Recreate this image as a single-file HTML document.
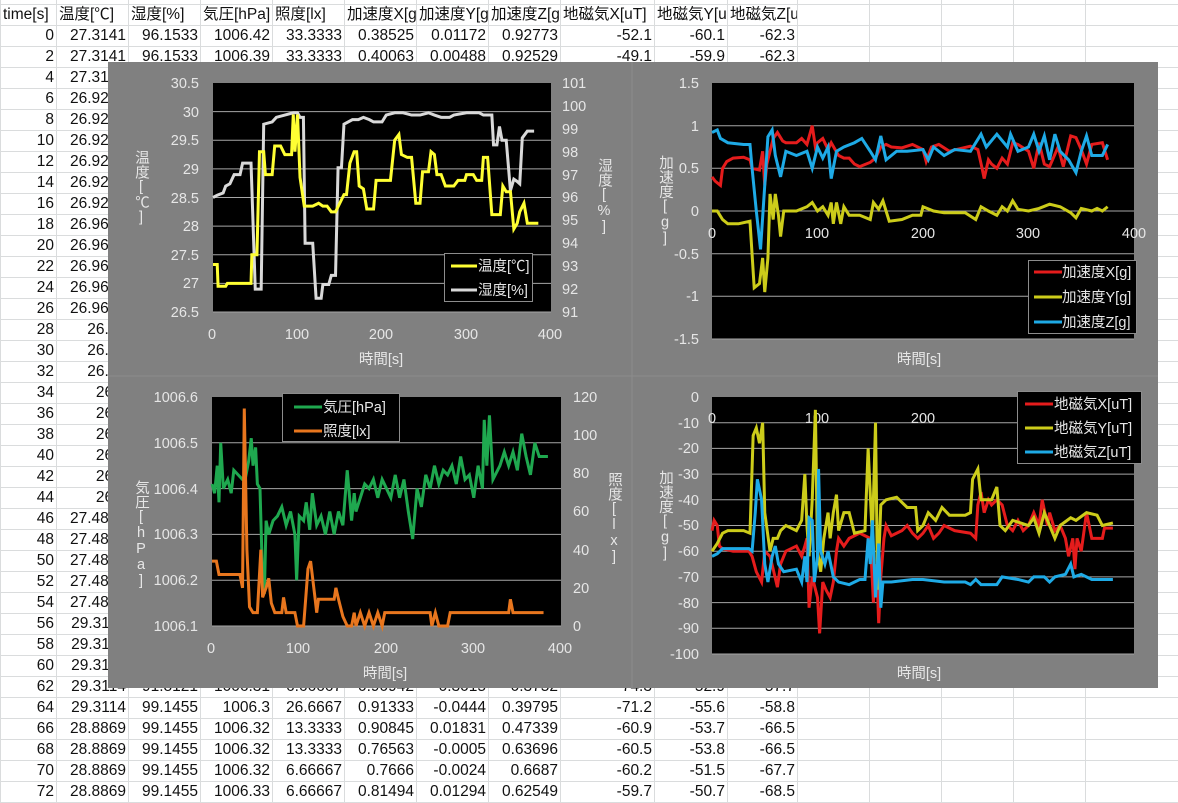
<!DOCTYPE html>
<html><head><meta charset="utf-8"><style>
body{margin:0;width:1178px;height:794px;overflow:hidden;background:#fff;position:relative;font-family:"Liberation Sans","Noto Sans CJK JP",sans-serif}
table{position:absolute;left:0;top:-17px;width:1180px;border-collapse:collapse;table-layout:fixed;font-size:15.5px;color:#111}
td{border:1px solid #dadcdd;height:20px;padding:0 2px;white-space:nowrap;overflow:hidden;text-align:right;line-height:20px}
tr.h td{text-align:left;padding-left:2px;text-overflow:clip}
svg{position:absolute;left:0;top:0}
svg text{font-family:"Liberation Sans","Noto Sans CJK JP",sans-serif;fill:#e6e6e6;font-size:14.5px}
.vt{position:absolute;writing-mode:vertical-rl;text-orientation:upright;color:#e6e6e6;font-size:14.5px;line-height:16px;letter-spacing:0px;font-family:"Liberation Sans","Noto Sans CJK JP",sans-serif}
</style></head><body>
<table>
<colgroup><col style="width:56px"><col style="width:72px"><col style="width:72px"><col style="width:72px"><col style="width:72px"><col style="width:72px"><col style="width:72px"><col style="width:72px"><col style="width:94px"><col style="width:73px"><col style="width:70px"><col style="width:72px"><col style="width:72px"><col style="width:72px"><col style="width:72px"><col style="width:95px"></colgroup>
<tr><td></td><td></td><td></td><td></td><td></td><td></td><td></td><td></td><td></td><td></td><td></td><td></td><td></td><td></td><td></td><td></td></tr>
<tr class="h"><td>time[s]</td><td>温度[℃]</td><td>湿度[%]</td><td>気圧[hPa]</td><td>照度[lx]</td><td>加速度X[g]</td><td>加速度Y[g]</td><td>加速度Z[g]</td><td>地磁気X[uT]</td><td>地磁気Y[uT]</td><td>地磁気Z[uT]</td><td></td><td></td><td></td><td></td><td></td></tr>
<tr><td>0</td><td>27.3141</td><td>96.1533</td><td>1006.42</td><td>33.3333</td><td>0.38525</td><td>0.01172</td><td>0.92773</td><td>-52.1</td><td>-60.1</td><td>-62.3</td><td></td><td></td><td></td><td></td><td></td></tr>
<tr><td>2</td><td>27.3141</td><td>96.1533</td><td>1006.39</td><td>33.3333</td><td>0.40063</td><td>0.00488</td><td>0.92529</td><td>-49.1</td><td>-59.9</td><td>-62.3</td><td></td><td></td><td></td><td></td><td></td></tr>
<tr><td>4</td><td>27.3141</td><td></td><td></td><td></td><td></td><td></td><td></td><td></td><td></td><td></td><td></td><td></td><td></td><td></td><td></td></tr>
<tr><td>6</td><td>26.9258</td><td></td><td></td><td></td><td></td><td></td><td></td><td></td><td></td><td></td><td></td><td></td><td></td><td></td><td></td></tr>
<tr><td>8</td><td>26.9258</td><td></td><td></td><td></td><td></td><td></td><td></td><td></td><td></td><td></td><td></td><td></td><td></td><td></td><td></td></tr>
<tr><td>10</td><td>26.9258</td><td></td><td></td><td></td><td></td><td></td><td></td><td></td><td></td><td></td><td></td><td></td><td></td><td></td><td></td></tr>
<tr><td>12</td><td>26.9258</td><td></td><td></td><td></td><td></td><td></td><td></td><td></td><td></td><td></td><td></td><td></td><td></td><td></td><td></td></tr>
<tr><td>14</td><td>26.9258</td><td></td><td></td><td></td><td></td><td></td><td></td><td></td><td></td><td></td><td></td><td></td><td></td><td></td><td></td></tr>
<tr><td>16</td><td>26.9258</td><td></td><td></td><td></td><td></td><td></td><td></td><td></td><td></td><td></td><td></td><td></td><td></td><td></td><td></td></tr>
<tr><td>18</td><td>26.9644</td><td></td><td></td><td></td><td></td><td></td><td></td><td></td><td></td><td></td><td></td><td></td><td></td><td></td><td></td></tr>
<tr><td>20</td><td>26.9644</td><td></td><td></td><td></td><td></td><td></td><td></td><td></td><td></td><td></td><td></td><td></td><td></td><td></td><td></td></tr>
<tr><td>22</td><td>26.9644</td><td></td><td></td><td></td><td></td><td></td><td></td><td></td><td></td><td></td><td></td><td></td><td></td><td></td><td></td></tr>
<tr><td>24</td><td>26.9644</td><td></td><td></td><td></td><td></td><td></td><td></td><td></td><td></td><td></td><td></td><td></td><td></td><td></td><td></td></tr>
<tr><td>26</td><td>26.9644</td><td></td><td></td><td></td><td></td><td></td><td></td><td></td><td></td><td></td><td></td><td></td><td></td><td></td><td></td></tr>
<tr><td>28</td><td>26.99</td><td></td><td></td><td></td><td></td><td></td><td></td><td></td><td></td><td></td><td></td><td></td><td></td><td></td><td></td></tr>
<tr><td>30</td><td>26.99</td><td></td><td></td><td></td><td></td><td></td><td></td><td></td><td></td><td></td><td></td><td></td><td></td><td></td><td></td></tr>
<tr><td>32</td><td>26.99</td><td></td><td></td><td></td><td></td><td></td><td></td><td></td><td></td><td></td><td></td><td></td><td></td><td></td><td></td></tr>
<tr><td>34</td><td>26.9</td><td></td><td></td><td></td><td></td><td></td><td></td><td></td><td></td><td></td><td></td><td></td><td></td><td></td><td></td></tr>
<tr><td>36</td><td>26.9</td><td></td><td></td><td></td><td></td><td></td><td></td><td></td><td></td><td></td><td></td><td></td><td></td><td></td><td></td></tr>
<tr><td>38</td><td>26.9</td><td></td><td></td><td></td><td></td><td></td><td></td><td></td><td></td><td></td><td></td><td></td><td></td><td></td><td></td></tr>
<tr><td>40</td><td>26.9</td><td></td><td></td><td></td><td></td><td></td><td></td><td></td><td></td><td></td><td></td><td></td><td></td><td></td><td></td></tr>
<tr><td>42</td><td>26.9</td><td></td><td></td><td></td><td></td><td></td><td></td><td></td><td></td><td></td><td></td><td></td><td></td><td></td><td></td></tr>
<tr><td>44</td><td>26.9</td><td></td><td></td><td></td><td></td><td></td><td></td><td></td><td></td><td></td><td></td><td></td><td></td><td></td><td></td></tr>
<tr><td>46</td><td>27.4855</td><td></td><td></td><td></td><td></td><td></td><td></td><td></td><td></td><td></td><td></td><td></td><td></td><td></td><td></td></tr>
<tr><td>48</td><td>27.4855</td><td></td><td></td><td></td><td></td><td></td><td></td><td></td><td></td><td></td><td></td><td></td><td></td><td></td><td></td></tr>
<tr><td>50</td><td>27.4855</td><td></td><td></td><td></td><td></td><td></td><td></td><td></td><td></td><td></td><td></td><td></td><td></td><td></td><td></td></tr>
<tr><td>52</td><td>27.4855</td><td></td><td></td><td></td><td></td><td></td><td></td><td></td><td></td><td></td><td></td><td></td><td></td><td></td><td></td></tr>
<tr><td>54</td><td>27.4855</td><td></td><td></td><td></td><td></td><td></td><td></td><td></td><td></td><td></td><td></td><td></td><td></td><td></td><td></td></tr>
<tr><td>56</td><td>29.3114</td><td></td><td></td><td></td><td></td><td></td><td></td><td></td><td></td><td></td><td></td><td></td><td></td><td></td><td></td></tr>
<tr><td>58</td><td>29.3114</td><td></td><td></td><td></td><td></td><td></td><td></td><td></td><td></td><td></td><td></td><td></td><td></td><td></td><td></td></tr>
<tr><td>60</td><td>29.3114</td><td></td><td></td><td></td><td></td><td></td><td></td><td></td><td></td><td></td><td></td><td></td><td></td><td></td><td></td></tr>
<tr><td>62</td><td>29.3114</td><td>91.8121</td><td>1006.31</td><td>6.66667</td><td>0.90942</td><td>0.3015</td><td>0.3752</td><td>-74.3</td><td>-52.9</td><td>-57.7</td><td></td><td></td><td></td><td></td><td></td></tr>
<tr><td>64</td><td>29.3114</td><td>99.1455</td><td>1006.3</td><td>26.6667</td><td>0.91333</td><td>-0.0444</td><td>0.39795</td><td>-71.2</td><td>-55.6</td><td>-58.8</td><td></td><td></td><td></td><td></td><td></td></tr>
<tr><td>66</td><td>28.8869</td><td>99.1455</td><td>1006.32</td><td>13.3333</td><td>0.90845</td><td>0.01831</td><td>0.47339</td><td>-60.9</td><td>-53.7</td><td>-66.5</td><td></td><td></td><td></td><td></td><td></td></tr>
<tr><td>68</td><td>28.8869</td><td>99.1455</td><td>1006.32</td><td>13.3333</td><td>0.76563</td><td>-0.0005</td><td>0.63696</td><td>-60.5</td><td>-53.8</td><td>-66.5</td><td></td><td></td><td></td><td></td><td></td></tr>
<tr><td>70</td><td>28.8869</td><td>99.1455</td><td>1006.32</td><td>6.66667</td><td>0.7666</td><td>-0.0024</td><td>0.6687</td><td>-60.2</td><td>-51.5</td><td>-67.7</td><td></td><td></td><td></td><td></td><td></td></tr>
<tr><td>72</td><td>28.8869</td><td>99.1455</td><td>1006.33</td><td>6.66667</td><td>0.81494</td><td>0.01294</td><td>0.62549</td><td>-59.7</td><td>-50.7</td><td>-68.5</td><td></td><td></td><td></td><td></td><td></td></tr>
</table>

<svg width="1178" height="794" viewBox="0 0 1178 794">
<rect x="108" y="62" width="1050" height="626" fill="#808080"/>
<line x1="632" y1="62" x2="632" y2="688" stroke="#8c8c8c"/>
<line x1="108" y1="376" x2="1158" y2="376" stroke="#8c8c8c"/>

<rect x="213" y="83" width="338" height="229" fill="#000"/>
<g stroke="#a6a6a6" stroke-width="1">
<line x1="213" x2="551" y1="111.6" y2="111.6"/><line x1="213" x2="551" y1="140.3" y2="140.3"/><line x1="213" x2="551" y1="168.9" y2="168.9"/><line x1="213" x2="551" y1="197.5" y2="197.5"/><line x1="213" x2="551" y1="226.1" y2="226.1"/><line x1="213" x2="551" y1="254.8" y2="254.8"/><line x1="213" x2="551" y1="283.4" y2="283.4"/><line x1="213" x2="551" y1="312" y2="312"/>
</g>
<g transform="translate(213,312) scale(0.845,-22.9) translate(0,-91)">
<polyline fill="none" stroke="#d9d9d9" stroke-width="3" vector-effect="non-scaling-stroke" points="0,96 5,96.1 12,96.2 15,96.5 20,96.6 25,97 32,97 35,97.5 45,97.5 50,92 57,92 60,99.2 70,99.3 75,99.5 85,99.6 95,99.7 100,99.7 103,99.5 107,99.5 109,94 118,94 122,91.6 128,91.6 130,92.2 137,92.2 140,92.6 145,92.6 148,97.3 152,97.3 155,99.2 165,99.4 172,99.4 178,99.5 185,99.4 190,99.3 200,99.3 205,99.6 215,99.7 225,99.7 235,99.6 245,99.6 255,99.7 262,99.6 270,99.5 280,99.5 285,99.6 300,99.7 315,99.7 320,99.6 330,99.6 332,98.3 336,98.3 339,99.1 342,98.5 347,98.5 352,96.3 356,96.8 360,96.7 363,96.6 366,98.6 372,98.9 380,98.9"/>
</g>
<g transform="translate(213,312) scale(0.845,-57.25) translate(0,-26.5)">
<polyline fill="none" stroke="#ffff33" stroke-width="3" vector-effect="non-scaling-stroke" points="0,27.33 5,27.33 6,26.95 15,26.95 17,27 25,27 45,27 46,27.5 52,27.5 55,29.3 60,29.3 62,28.9 70,28.9 73,29.4 80,29.4 85,29.25 93,29.25 95,29.95 97,29.3 100,29.95 103,28.85 108,28.35 118,28.35 125,28.4 130,28.35 135,28.35 140,28.25 145,28.25 150,28.4 155,28.55 158,28.55 162,29.1 167,29.3 170,29.3 173,28.7 178,28.65 182,28.3 190,28.3 193,28.8 210,28.8 215,29.5 220,29.6 223,29.25 230,29.2 235,29.2 240,28.4 245,28.4 248,28.95 255,28.95 258,29.3 262,29.25 265,28.9 270,28.9 275,28.7 285,28.7 290,28.8 298,28.8 300,28.9 308,28.9 312,28.8 318,28.8 320,29.2 325,29.2 330,28.2 340,28.2 343,28.7 347,28.6 352,28.6 356,27.95 360,28.05 363,28.25 368,28.4 372,28.05 385,28.05"/>
</g>
<g text-anchor="end">
<text x="199" y="88">30.5</text><text x="199" y="117">30</text><text x="199" y="145">29.5</text><text x="199" y="174">29</text><text x="199" y="203">28.5</text><text x="199" y="231">28</text><text x="199" y="260">27.5</text><text x="199" y="288">27</text><text x="199" y="317">26.5</text>
</g>
<g>
<text x="562" y="88">101</text><text x="562" y="111">100</text><text x="562" y="134">99</text><text x="562" y="157">98</text><text x="562" y="180">97</text><text x="562" y="202">96</text><text x="562" y="225">95</text><text x="562" y="248">94</text><text x="562" y="271">93</text><text x="562" y="294">92</text><text x="562" y="317">91</text>
</g>
<g text-anchor="middle">
<text x="212" y="339">0</text><text x="297" y="339">100</text><text x="381" y="339">200</text><text x="466" y="339">300</text><text x="550" y="339">400</text>
<text x="381" y="364">時間[s]</text>
</g>
<rect x="444.5" y="253.5" width="88" height="48" fill="#000" stroke="#8c8c8c"/>
<line x1="451" x2="477" y1="266" y2="266" stroke="#ffff33" stroke-width="3"/>
<line x1="451" x2="477" y1="290" y2="290" stroke="#d9d9d9" stroke-width="3"/>
<text x="478" y="271">温度[℃]</text><text x="478" y="295">湿度[%]</text>

<rect x="712" y="83" width="422" height="256" fill="#000"/>
<g stroke="#a6a6a6">
<line x1="712" x2="1134" y1="125.7" y2="125.7"/><line x1="712" x2="1134" y1="168.3" y2="168.3"/><line x1="712" x2="1134" y1="211" y2="211"/><line x1="712" x2="1134" y1="253.7" y2="253.7"/><line x1="712" x2="1134" y1="296.3" y2="296.3"/><line x1="712" x2="1134" y1="339" y2="339"/>
</g>
<g transform="translate(712,211) scale(1.055,-85.33)" fill="none" stroke-width="3">
<polyline stroke="#e51c1c" vector-effect="non-scaling-stroke" points="0,0.4 3,0.35 8,0.3 10,0.5 14,0.58 20,0.62 30,0.63 36,0.6 38,0.5 45,0.48 48,0.7 50,0.3 52,0.55 58,0.85 62,0.92 67,0.82 70,0.8 80,0.8 85,0.85 90,0.78 95,1 98,0.75 100,0.8 105,0.85 110,0.72 113,0.8 120,0.65 125,0.62 130,0.62 135,0.55 140,0.52 150,0.57 155,0.62 160,0.75 165,0.78 170,0.75 180,0.74 190,0.78 200,0.72 203,0.58 208,0.75 215,0.78 225,0.7 235,0.73 245,0.76 252,0.72 256,0.5 258,0.38 262,0.6 265,0.55 270,0.5 275,0.62 280,0.55 285,0.8 290,0.78 300,0.7 305,0.5 310,0.8 315,0.55 320,0.52 328,0.75 333,0.52 340,0.88 345,0.86 350,0.72 355,0.55 360,0.78 370,0.8 375,0.6"/>
<polyline stroke="#cccc1a" vector-effect="non-scaling-stroke" points="0,0 5,0 10,-0.1 15,-0.15 25,-0.15 36,-0.12 40,-0.9 45,-0.85 48,-0.55 50,-0.95 53,-0.55 55,0.2 58,-0.1 60,0.2 63,-0.05 65,-0.3 68,0 80,0 90,0.05 95,0.1 100,0 105,0.05 110,-0.05 113,0.1 115,-0.15 118,0.1 122,-0.15 125,0.05 130,-0.05 140,-0.05 150,-0.1 153,0.1 158,0.02 162,0.12 165,0 168,-0.12 180,-0.1 190,-0.05 198,-0.05 200,0.05 210,0 220,-0.02 240,-0.02 250,-0.1 255,0.05 262,0 270,-0.05 275,0.05 280,0 285,0.12 290,0.02 300,0 310,0.03 320,0.08 330,0.05 340,-0.02 345,-0.08 350,0.03 360,0 365,0.03 370,0 375,0.05"/>
<polyline stroke="#1eaae6" vector-effect="non-scaling-stroke" points="0,0.92 5,0.95 8,0.85 15,0.8 30,0.78 36,0.78 38,0.5 42,0 46,-0.45 50,0.3 53,0.87 57,0.95 60,0.65 65,0.4 70,0.7 80,0.65 90,0.7 95,0.5 100,0.75 105,0.62 110,0.75 113,0.38 118,0.7 125,0.75 135,0.8 142,0.85 150,0.7 155,0.6 160,0.88 165,0.6 175,0.7 185,0.7 200,0.72 205,0.6 210,0.75 220,0.65 230,0.72 245,0.7 255,0.9 260,0.75 270,0.9 280,0.75 283,0.9 290,0.7 300,0.75 305,0.9 310,0.7 315,0.88 320,0.6 325,0.9 330,0.7 338,0.6 345,0.45 350,0.7 355,0.88 360,0.65 370,0.65 375,0.78"/>
</g>
<g text-anchor="end">
<text x="699" y="88">1.5</text><text x="699" y="131">1</text><text x="699" y="173">0.5</text><text x="699" y="216">0</text><text x="699" y="259">-0.5</text><text x="699" y="301">-1</text><text x="699" y="344">-1.5</text>
</g>
<g text-anchor="middle">
<text x="712" y="238">0</text><text x="817" y="238">100</text><text x="923" y="238">200</text><text x="1028" y="238">300</text><text x="1134" y="238">400</text>
<text x="919" y="364">時間[s]</text>
</g>
<rect x="1028.5" y="260.5" width="108" height="73" fill="#000" stroke="#8c8c8c"/>
<line x1="1034" x2="1062" y1="272" y2="272" stroke="#e51c1c" stroke-width="3"/>
<line x1="1034" x2="1062" y1="297" y2="297" stroke="#cccc1a" stroke-width="3"/>
<line x1="1034" x2="1062" y1="322" y2="322" stroke="#1eaae6" stroke-width="3"/>
<text x="1062" y="277">加速度X[g]</text><text x="1062" y="302">加速度Y[g]</text><text x="1062" y="327">加速度Z[g]</text>

<rect x="212" y="397" width="349" height="229" fill="#000"/>
<g stroke="#a6a6a6">
<line x1="212" x2="561" y1="442.8" y2="442.8"/><line x1="212" x2="561" y1="488.6" y2="488.6"/><line x1="212" x2="561" y1="534.4" y2="534.4"/><line x1="212" x2="561" y1="580.2" y2="580.2"/><line x1="212" x2="561" y1="626" y2="626"/>
</g>
<g transform="translate(212,626) scale(0.8725,-458) translate(0,-1006.1)">
<polyline fill="none" stroke="#1fa84f" stroke-width="3" vector-effect="non-scaling-stroke" points="0,1006.41 3,1006.39 6,1006.45 8,1006.37 10,1006.5 13,1006.4 18,1006.42 22,1006.39 25,1006.44 30,1006.43 35,1006.42 38,1006.42 42,1006.46 45,1006.51 47,1006.45 50,1006.49 52,1006.41 55,1006.4 58,1006.2 60,1006.17 62,1006.33 65,1006.3 70,1006.33 75,1006.34 80,1006.36 85,1006.32 90,1006.35 95,1006.3 97,1006.2 100,1006.34 105,1006.33 108,1006.37 112,1006.31 115,1006.39 120,1006.32 125,1006.34 130,1006.3 135,1006.35 140,1006.3 145,1006.35 150,1006.32 155,1006.44 160,1006.33 163,1006.39 165,1006.35 170,1006.38 175,1006.41 180,1006.4 185,1006.42 190,1006.38 195,1006.42 200,1006.4 205,1006.38 210,1006.43 215,1006.38 220,1006.42 225,1006.35 230,1006.29 235,1006.4 240,1006.36 245,1006.43 250,1006.4 255,1006.45 260,1006.41 265,1006.44 270,1006.43 275,1006.45 280,1006.41 285,1006.47 290,1006.42 295,1006.43 300,1006.38 305,1006.45 310,1006.4 312,1006.55 315,1006.45 318,1006.56 322,1006.42 330,1006.45 335,1006.48 340,1006.45 345,1006.48 350,1006.44 355,1006.52 360,1006.47 365,1006.43 370,1006.5 375,1006.47 385,1006.47"/>
</g>
<g transform="translate(212,626) scale(0.8725,-1.908)">
<polyline fill="none" stroke="#e8761e" stroke-width="3" vector-effect="non-scaling-stroke" points="0,34 5,34 8,27 15,27 25,27 32,27 35,20 37,114 40,40 43,10 47,7 52,7 56,40 58,15 62,20 65,25 68,12 72,7 80,7 82,15 85,7 95,7 98,0 105,0 110,30 113,34 118,15 120,7 122,14 140,14 142,20 145,14 150,5 155,0 160,0 163,7 165,0 170,7 175,0 180,7 185,0 190,7 195,0 198,7 250,7 252,0 256,7 260,0 270,0 273,7 340,7 342,14 345,7 380,7"/>
</g>
<g text-anchor="end">
<text x="198" y="402">1006.6</text><text x="198" y="448">1006.5</text><text x="198" y="494">1006.4</text><text x="198" y="539">1006.3</text><text x="198" y="585">1006.2</text><text x="198" y="631">1006.1</text>
</g>
<g>
<text x="573" y="402">120</text><text x="573" y="440">100</text><text x="573" y="478">80</text><text x="573" y="516">60</text><text x="573" y="555">40</text><text x="573" y="593">20</text><text x="573" y="631">0</text>
</g>
<g text-anchor="middle">
<text x="211" y="653">0</text><text x="298" y="653">100</text><text x="386" y="653">200</text><text x="473" y="653">300</text><text x="560" y="653">400</text>
<text x="385" y="678">時間[s]</text>
</g>
<rect x="282.5" y="393.5" width="117" height="48" fill="#000" stroke="#8c8c8c"/>
<line x1="294" x2="322" y1="407" y2="407" stroke="#1fa84f" stroke-width="3"/>
<line x1="294" x2="322" y1="431" y2="431" stroke="#e8761e" stroke-width="3"/>
<text x="323" y="412">気圧[hPa]</text><text x="323" y="436">照度[lx]</text>

<rect x="712" y="397" width="422" height="257" fill="#000"/>
<g stroke="#a6a6a6">
<line x1="712" x2="1134" y1="422.7" y2="422.7"/><line x1="712" x2="1134" y1="448.4" y2="448.4"/><line x1="712" x2="1134" y1="474.1" y2="474.1"/><line x1="712" x2="1134" y1="499.8" y2="499.8"/><line x1="712" x2="1134" y1="525.5" y2="525.5"/><line x1="712" x2="1134" y1="551.2" y2="551.2"/><line x1="712" x2="1134" y1="576.9" y2="576.9"/><line x1="712" x2="1134" y1="602.6" y2="602.6"/><line x1="712" x2="1134" y1="628.3" y2="628.3"/><line x1="712" x2="1134" y1="654" y2="654"/>
</g>
<g text-anchor="middle">
<text x="712" y="423">0</text><text x="817" y="423">100</text><text x="923" y="423">200</text>
</g>
<g transform="translate(712,397) scale(1.055,-2.57)" fill="none" stroke-width="3">
<polyline stroke="#e51c1c" vector-effect="non-scaling-stroke" points="0,-52 2,-48 5,-50 7,-58 10,-59 20,-60 35,-60 38,-62 42,-68 47,-72 50,-60 55,-62 58,-67 62,-74 65,-65 70,-60 80,-58 85,-62 88,-58 90,-55 92,-82 95,-70 100,-78 102,-92 105,-72 108,-75 112,-78 115,-72 118,-60 120,-55 125,-58 130,-55 140,-53 150,-55 153,-80 156,-65 158,-88 160,-70 163,-55 165,-50 170,-54 180,-52 185,-50 190,-53 195,-55 200,-53 205,-50 210,-55 215,-53 220,-50 230,-52 245,-53 250,-55 252,-42 255,-37 258,-45 262,-40 265,-42 270,-40 275,-42 280,-50 285,-52 290,-48 295,-52 300,-50 305,-45 310,-50 313,-40 318,-50 320,-45 325,-52 330,-50 335,-55 338,-62 342,-55 344,-67 346,-55 350,-60 355,-45 360,-55 370,-55 372,-51 380,-51"/>
<polyline stroke="#cccc1a" vector-effect="non-scaling-stroke" points="0,-60 5,-57 10,-53 15,-52 30,-52 36,-53 39,-15 42,-12 45,-18 48,-10 50,-45 55,-60 58,-55 62,-55 65,-52 70,-50 80,-52 85,-48 88,-30 90,-50 92,-62 95,-40 98,-5 100,-60 103,-68 106,-55 110,-45 112,-55 115,-45 118,-38 120,-52 125,-45 130,-45 135,-53 145,-52 148,-20 152,-55 155,-10 157,-75 160,-42 165,-40 175,-39 185,-43 193,-43 195,-52 200,-50 205,-45 212,-48 218,-43 225,-46 240,-46 245,-45 247,-32 252,-28 255,-40 265,-40 270,-35 273,-50 278,-52 285,-48 300,-50 305,-47 310,-53 315,-45 320,-50 325,-55 330,-50 340,-47 345,-48 355,-45 365,-46 370,-50 380,-49"/>
<polyline stroke="#1eaae6" vector-effect="non-scaling-stroke" points="0,-62 5,-61 10,-59 35,-59 38,-60 41,-45 43,-32 47,-40 50,-65 53,-72 57,-62 60,-58 63,-65 68,-68 80,-67 85,-72 88,-62 90,-72 92,-47 95,-48 97,-72 100,-62 101,-28 103,-60 107,-65 110,-60 115,-70 120,-72 130,-73 140,-71 145,-71 148,-55 150,-65 152,-48 155,-78 158,-57 160,-82 162,-72 170,-72 190,-71 200,-71 220,-72 240,-72 245,-73 250,-71 255,-73 270,-73 275,-70 290,-71 300,-72 305,-70 315,-70 320,-72 325,-70 335,-69 340,-65 343,-70 350,-69 360,-71 370,-71 380,-71"/>
</g>
<g text-anchor="end">
<text x="699" y="402">0</text><text x="699" y="428">-10</text><text x="699" y="453">-20</text><text x="699" y="479">-30</text><text x="699" y="505">-40</text><text x="699" y="530">-50</text><text x="699" y="556">-60</text><text x="699" y="582">-70</text><text x="699" y="608">-80</text><text x="699" y="633">-90</text><text x="699" y="659">-100</text>
</g>
<text x="919" y="678" text-anchor="middle">時間[s]</text>
<rect x="1017.5" y="391.5" width="124" height="72" fill="#000" stroke="#8c8c8c"/>
<line x1="1025" x2="1053" y1="404" y2="404" stroke="#e51c1c" stroke-width="3"/>
<line x1="1025" x2="1053" y1="428" y2="428" stroke="#cccc1a" stroke-width="3"/>
<line x1="1025" x2="1053" y1="452" y2="452" stroke="#1eaae6" stroke-width="3"/>
<text x="1054" y="409">地磁気X[uT]</text><text x="1054" y="433">地磁気Y[uT]</text><text x="1054" y="457">地磁気Z[uT]</text>
</svg>
<div class="vt" style="left:133px;top:150px">温度[℃]</div>
<div class="vt" style="left:596px;top:158px">湿度[%]</div>
<div class="vt" style="left:657px;top:155px">加速度[g]</div>
<div class="vt" style="left:133px;top:480px">気圧[hPa]</div>
<div class="vt" style="left:606px;top:472px">照度[lx]</div>
<div class="vt" style="left:657px;top:470px">加速度[g]</div>
</body></html>
